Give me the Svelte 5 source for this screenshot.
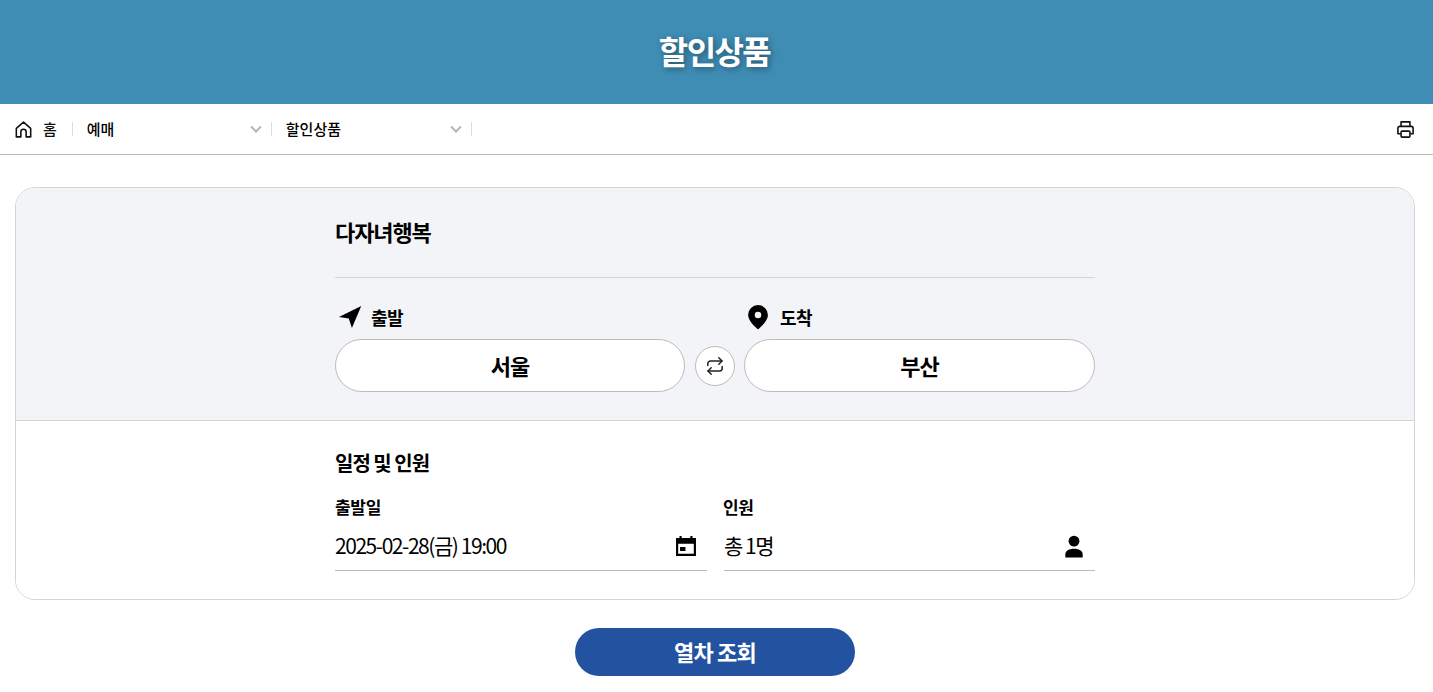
<script lang="ts">
  let from = $state("서울");
  let to = $state("부산");

  function swap() {
    [from, to] = [to, from];
  }
</script>

<header class="hero">
  <h1>할인상품</h1>
</header>

<nav class="crumbs">
  <a class="home" href="#home">
    <svg width="19" height="19" viewBox="0 0 18 18" fill="none" stroke="#111" stroke-width="1.500" stroke-linejoin="round">
      <path d="M2.200 8 9 2l6.800 6v8h-4.300v-4.800a2.500 2.500 0 0 0-5 0V16H2.200z" />
    </svg>
    <span>홈</span>
  </a>
  <button class="crumb first"><span>예매</span><svg class="chev" width="14" height="14" viewBox="0 0 14 14" fill="none" stroke="#b5b5b5" stroke-width="2"><path d="m2 4.500 5 5 5-5" /></svg></button>
  <button class="crumb"><span>할인상품</span><svg class="chev" width="14" height="14" viewBox="0 0 14 14" fill="none" stroke="#b5b5b5" stroke-width="2"><path d="m2 4.500 5 5 5-5" /></svg></button>
  <button class="print" aria-label="인쇄">
    <svg width="19" height="19" viewBox="0 0 18 18" fill="none" stroke="#111" stroke-width="1.500" stroke-linejoin="round">
      <path d="M4.800 6V1.800h8.400V6" />
      <path d="M4.500 13H1.800V7.800A1.800 1.800 0 0 1 3.600 6h10.800a1.800 1.800 0 0 1 1.800 1.800V13h-2.700" />
      <rect x="4.800" y="10.500" width="8.400" height="5.700" rx="1" />
    </svg>
  </button>
</nav>

<main class="page">
  <section class="card">
    <div class="route">
      <div class="inner">
        <h2>다자녀행복</h2>
        <hr />
        <div class="stations">
          <div class="station">
            <div class="label">
              <svg width="28" height="28" viewBox="0 0 24 24" fill="#000"><path d="M22.500 2.500 3.400 12l8.400 1.200 2.700 8.300z" /></svg>
              <span>출발</span>
            </div>
            <button class="pill">{from}</button>
          </div>
          <button class="swap" aria-label="출발 도착 바꾸기" onclick={swap}>
            <svg width="20" height="20" viewBox="0 0 20 20" fill="none" stroke="#222" stroke-width="1.500" stroke-linecap="round" stroke-linejoin="round">
              <path d="M13.800 1.800 17 5l-3.200 3.200" />
              <path d="M17 5H5.500A2.700 2.700 0 0 0 2.800 7.700V9.500" />
              <path d="M6.200 18.200 3 15l3.200-3.200" />
              <path d="M3 15h11.500a2.700 2.700 0 0 0 2.700-2.700v-1.800" />
            </svg>
          </button>
          <div class="station">
            <div class="label">
              <svg width="28" height="28" viewBox="0 0 24 24" fill="#000"><path fill-rule="evenodd" d="M12 1.800a8.500 8.500 0 0 0-8.500 8.500c0 5.800 8.500 12.300 8.500 12.300s8.500-6.500 8.500-12.300A8.500 8.500 0 0 0 12 1.800zm0 5.700a2.800 2.800 0 1 1 0 5.600 2.800 2.800 0 0 1 0-5.600z" /></svg>
              <span>도착</span>
            </div>
            <button class="pill">{to}</button>
          </div>
        </div>
      </div>
    </div>

    <div class="schedule">
      <div class="inner">
        <h3>일정 및 인원</h3>
        <div class="fields">
          <div class="field">
            <div class="field-label">출발일</div>
            <div class="field-value">
              <span>2025-02-28(금) 19:00</span>
              <svg width="26" height="26" viewBox="0 0 24 24" fill="#000" fill-rule="evenodd"><path d="M2.800 4.600H6V2.800h2v1.800h8V2.800h2v1.800h3.200v16.600H2.800zM4.800 10v9.200h14.400V10zM6.500 13h5v3.500h-5z" /></svg>
            </div>
          </div>
          <div class="field">
            <div class="field-label">인원</div>
            <div class="field-value">
              <span>총 1명</span>
              <svg width="26" height="26" viewBox="0 0 24 24" fill="#000"><circle cx="12" cy="7.500" r="5" /><path d="M4 22.500v-3c0-3 3.400-5 8-5s8 2 8 5v3z" /></svg>
            </div>
          </div>
        </div>
      </div>
    </div>
  </section>

  <button class="submit">열차 조회</button>
</main>

<style>
  :global(body) {
    margin: 0;
    background: #fff;
    color: #000;
    font-family: "Noto Sans CJK KR", "Noto Sans", sans-serif;
  }
  button {
    font-family: inherit;
    color: inherit;
    cursor: pointer;
  }
  .hero {
    height: 104px;
    background: #3f8db5;
    display: flex;
    align-items: center;
    justify-content: center;
    padding-right: 4px;
  }
  h1 {
    margin: -4px 0 0;
    color: #fff;
    font-size: 32px;
    font-weight: 700;
    letter-spacing: -1.600px;
    text-shadow: 2px 2px 6px rgba(0, 0, 0, 0.4);
  }
  .crumbs {
    height: 50px;
    border-bottom: 1px solid #bbb;
    display: flex;
    align-items: center;
    padding: 0 18px 0 14px;
    font-size: 15px;
    font-weight: 500;
  }
  .crumbs span {
    padding-bottom: 2px;
  }
  .home {
    display: flex;
    align-items: center;
    gap: 10px;
    color: #111;
    text-decoration: none;
    padding-right: 15px;
    border-right: 1px solid #ddd;
    height: 14px;
  }
  .crumb {
    width: 200px;
    height: 14px;
    padding: 0 8px 0 14px;
    display: flex;
    align-items: center;
    justify-content: space-between;
    background: none;
    border: 0;
    border-right: 1px solid #ddd;
    font-size: 15px;
    font-weight: 500;
  }
  .first {
    width: 199px;
  }
  .print {
    margin-left: auto;
    padding: 0;
    border: 0;
    background: none;
    display: flex;
  }
  .page {
    padding: 32px 18px 0 15px;
    display: flex;
    flex-direction: column;
    align-items: center;
  }
  .card {
    width: 100%;
    box-sizing: border-box;
    border: 1px solid #d5d5d5;
    border-radius: 20px;
  }
  .inner {
    width: 760px;
    margin: 0 auto;
  }
  .route {
    background: #f3f4f8;
    border-bottom: 1px solid #d5d5d5;
    border-radius: 19px 19px 0 0;
    height: 233px;
    box-sizing: border-box;
    padding-top: 27px;
  }
  h2 {
    margin: 0;
    font-size: 22px;
    line-height: 32px;
    font-weight: 700;
    letter-spacing: -1.100px;
  }
  hr {
    margin: 30px 0 0;
    border: 0;
    border-top: 1px solid #d5d5d5;
  }
  .stations {
    display: flex;
    align-items: flex-end;
    gap: 9px;
    margin-top: 23px;
  }
  .station {
    flex: 1;
    min-width: 0;
  }
  .label {
    display: flex;
    align-items: center;
    gap: 8px;
    height: 32px;
    font-size: 18px;
    font-weight: 700;
    letter-spacing: -0.500px;
    line-height: 28px;
  }
  .pill {
    display: block;
    width: 100%;
    height: 53px;
    margin-top: 6px;
    padding: 0 0 2px;
    border: 1px solid #bbb;
    border-radius: 27px;
    background: #fff;
    font-size: 22px;
    font-weight: 700;
    letter-spacing: -1px;
  }
  .swap {
    width: 40px;
    height: 40px;
    margin: 0 0 6px 1px;
    flex: none;
    padding: 0;
    border: 1px solid #bbb;
    border-radius: 50%;
    background: #fff;
    display: flex;
    align-items: center;
    justify-content: center;
  }
  .station:first-child {
    flex: 0 0 350px;
  }
  .schedule {
    height: 178px;
    box-sizing: border-box;
    padding-top: 26px;
    border-radius: 0 0 19px 19px;
    background: #fff;
  }
  h3 {
    margin: 0;
    font-size: 20px;
    line-height: 32px;
    font-weight: 700;
    letter-spacing: -1px;
  }
  .fields {
    display: grid;
    grid-template-columns: 372px 371px;
    justify-content: space-between;
    margin-top: 14px;
  }
  .field-label {
    font-size: 17px;
    line-height: 28px;
    font-weight: 700;
    letter-spacing: -0.300px;
  }
  .field + .field .field-label {
    margin-left: -1px;
  }
  .field-value {
    height: 50px;
    display: flex;
    align-items: center;
    justify-content: space-between;
    padding-right: 8px;
    border-bottom: 1px solid #bbb;
    font-size: 21px;
    letter-spacing: -1.450px;
    box-sizing: border-box;
  }
  .field-value span {
    padding-bottom: 2px;
  }
  .submit {
    width: 280px;
    height: 48px;
    margin: 28px 0 0;
    padding: 0 0 3px;
    border: 0;
    border-radius: 24px;
    background: #2353a0;
    color: #fff;
    font-size: 22px;
    font-weight: 700;
    letter-spacing: -0.800px;
  }
</style>
